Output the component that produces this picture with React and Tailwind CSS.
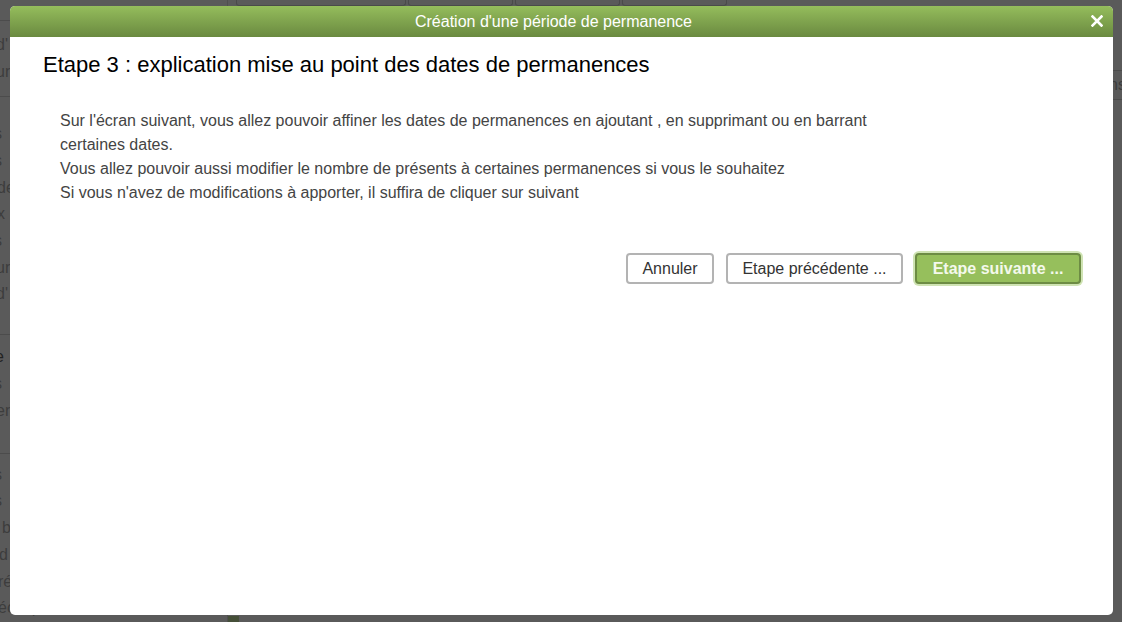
import React from "react";

export default function App() {
  const font = { fontFamily: '"Liberation Sans", Arial, sans-serif' };
  return (
    <div className="relative w-[1122px] h-[622px] overflow-hidden bg-[#5a5a5a]" style={font}>
      {/* background page (dimmed) */}
      <div className="flex h-full">
        <div className="w-[228px] flex flex-col text-[16px] text-[#3d3d3d] border-r border-[#4f4f4f]">
          <div className="h-[22px] border-b border-[#4c4c4c]"></div>
          <div className="flex flex-col pt-[10px] leading-[27px] h-[78px] border-b border-[#4c4c4c]">
            <span className="-ml-[4px]">d'</span>
            <span className="-ml-[4px]">ur</span>
          </div>
          <div className="flex flex-col pt-[24px] leading-[26.7px] h-[245px] border-b border-[#4c4c4c]">
            <span className="-ml-[6px]">s</span>
            <span className="-ml-[6px]">s</span>
            <span className="-ml-[3px]">de</span>
            <span className="-ml-[3px]">x</span>
            <span className="-ml-[6px]">s</span>
            <span className="-ml-[4px]">ur</span>
            <span className="-ml-[4px]">d'</span>
          </div>
          <div className="flex flex-col pt-[8px] leading-[27px] h-[122px] border-b border-[#4c4c4c]">
            <span className="-ml-[5px] text-[#222]">e</span>
            <span className="-ml-[6px]">s</span>
            <span className="-ml-[4px]">er</span>
          </div>
          <div className="flex flex-col pt-[8px] leading-[26.7px]">
            <span className="-ml-[6px]">s</span>
            <span className="-ml-[6px]">s</span>
            <span className="ml-[2px]">b</span>
            <span className="-ml-[1px]">d</span>
            <span className="-ml-[2px]">ré</span>
            <span className="-ml-[2px]">écifiques</span>
          </div>
        </div>
        <div className="flex-1 flex flex-col">
          <div className="h-[8px] flex gap-[2px] pl-[8px]">
            <div className="w-[170px] h-[6px] rounded-b-[3px] border border-t-0 border-[#4a4a4a]"></div>
            <div className="w-[105px] h-[6px] rounded-b-[3px] border border-t-0 border-[#4a4a4a]"></div>
            <div className="w-[105px] h-[6px] rounded-b-[3px] border border-t-0 border-[#4a4a4a]"></div>
            <div className="w-[105px] h-[6px] rounded-b-[3px] border border-t-0 border-[#4a4a4a]"></div>
          </div>
          <div className="flex-1"></div>
          <div className="h-[6px] w-[11px] bg-[#454f38]"></div>
        </div>
      </div>
      <div className="absolute right-0 top-[70px] w-[12px] h-[30px] border-y border-l border-[#4c4c4c] text-[16px] text-[#3d3d3d] leading-[28px] overflow-hidden">
        <span className="-ml-[2px]">ns</span>
      </div>

      {/* modal */}
      <div className="absolute left-[10px] top-[6px] w-[1103px] h-[609px] rounded-[5px] bg-white overflow-hidden flex flex-col">
        <div className="h-[31px] flex items-center justify-center relative bg-gradient-to-b from-[#95bd5c] to-[#6a8a40] text-white text-[16px] pr-[16px]">
          <span>Création d'une période de permanence</span>
          <svg className="absolute right-[10px] top-[9px]" width="12" height="12" viewBox="0 0 12 12">
            <path d="M1.5 1.5 L10.5 10.5 M10.5 1.5 L1.5 10.5" stroke="white" strokeWidth="2.6" strokeLinecap="square" />
          </svg>
        </div>
        <div className="pl-[33px] pt-[14px] text-[22px] text-black leading-[28px]">
          Etape 3 : explication mise au point des dates de permanences
        </div>
        <div className="pl-[50px] pt-[30px] text-[16px] text-[#444] leading-[24px] w-[885px]">
          <p>Sur l'écran suivant, vous allez pouvoir affiner les dates de permanences en ajoutant , en supprimant ou en barrant certaines dates.</p>
          <p>Vous allez pouvoir aussi modifier le nombre de présents à certaines permanences si vous le souhaitez</p>
          <p>Si vous n'avez de modifications à apporter, il suffira de cliquer sur suivant</p>
        </div>
        <div className="flex justify-end items-center gap-[12px] pr-[32px] pt-[48px]">
          <button className="h-[31px] w-[88px] rounded-[4px] border-2 border-[#b3b3b3] bg-white text-[16px] text-[#333]">Annuler</button>
          <button className="h-[31px] w-[177px] rounded-[4px] border-2 border-[#b3b3b3] bg-white text-[16px] text-[#333]">Etape précédente ...</button>
          <button className="h-[31px] w-[166px] rounded-[4px] border-2 border-[#6d8c44] bg-[#96bf5c] text-[16px] font-bold text-[#f4f9ec] ring-2 ring-[#cfe3b3]">Etape suivante ...</button>
        </div>
      </div>
    </div>
  );
}
